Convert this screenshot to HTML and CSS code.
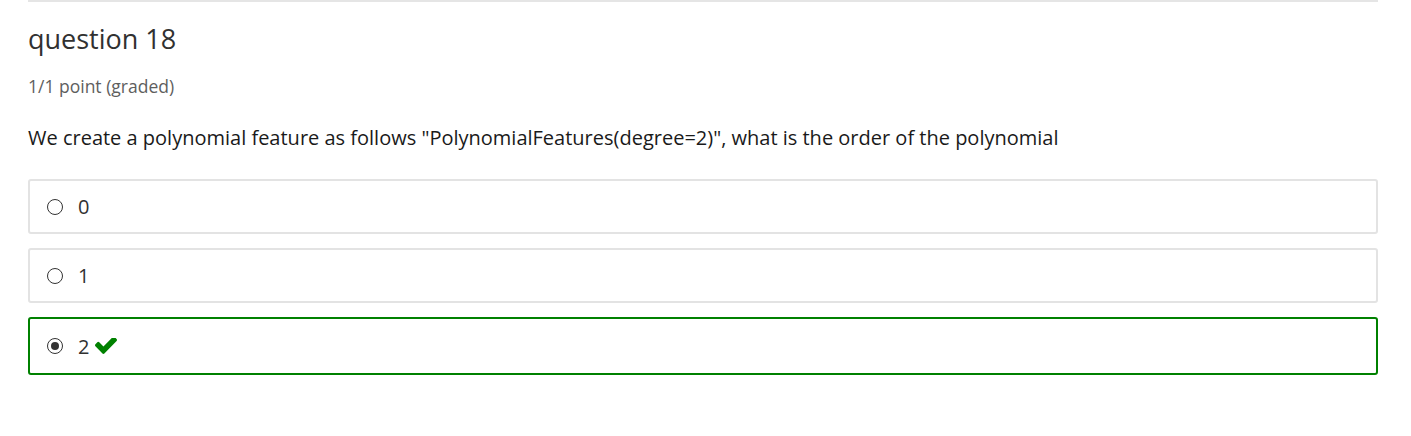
FILE: index.html
```html
<!DOCTYPE html>
<html lang="en">
<head>
<meta charset="utf-8">
<title>question 18</title>
<link rel="stylesheet" href="styles.css">
</head>
<body>
<div class="problem">
  <h3 class="problem-header">question 18</h3>
  <div class="problem-progress">1/1 point (graded)</div>
  <p class="question">We create a polynomial feature as follows "PolynomialFeatures(degree=2)", what is the order of the polynomial</p>
  <div class="choices">
    <label class="field">
      <span class="radio"></span>
      <span class="label-text">0</span>
    </label>
    <label class="field">
      <span class="radio"></span>
      <span class="label-text">1</span>
    </label>
    <label class="field correct">
      <span class="radio checked"></span>
      <span class="label-text">2</span>
      <svg class="check" viewBox="121 430 1550 1100" width="22" height="16" preserveAspectRatio="none" aria-hidden="true"><path d="M1671 566q0 40-28 68l-724 724-136 136q-28 28-68 28t-68-28l-136-136-362-362q-28-28-28-68t28-68l136-136q28-28 68-28t68 28l294 295 656-657q28-28 68-28t68 28l136 136q28 28 28 68z"/></svg>
    </label>
  </div>
</div>
</body>
</html>
```
FILE: styles.css
```css
html, body {
  margin: 0;
  padding: 0;
  background: #fff;
}
body {
  font-family: "Open Sans", "Noto Sans", sans-serif;
  color: #313131;
}
.problem {
  width: 1350px;
  margin-left: 28px;
  border-top: 2px solid #e5e5e5;
  box-sizing: border-box;
}
.problem-header {
  margin: 19px 0 0 0;
  font-size: 27px;
  font-weight: 400;
  line-height: 36px;
  color: #313131;
}
.problem-progress {
  margin-top: 17px;
  font-size: 17.5px;
  line-height: 24px;
  color: #5e5e5e;
}
.question {
  margin: 25px 0 0 0;
  font-size: 20px;
  line-height: 30px;
  color: #1a1a1a;
}
.choices {
  margin-top: 26px;
  display: flex;
  flex-direction: column;
  gap: 14px;
}
.field {
  display: flex;
  align-items: center;
  height: 55px;
  box-sizing: border-box;
  border: 2px solid #e3e3e3;
  border-radius: 3px;
  padding-left: 17px;
  font-size: 20px;
  color: #313131;
}
.field.correct {
  height: 58px;
  border-color: #008100;
}
.radio {
  width: 16px;
  height: 16px;
  border: 1px solid #333;
  border-radius: 50%;
  box-sizing: border-box;
  flex: none;
  position: relative;
  background: #fff;
}
.radio.checked::after {
  content: "";
  position: absolute;
  left: 3px;
  top: 3px;
  width: 8px;
  height: 8px;
  border-radius: 50%;
  background: #333;
}
.label-text {
  margin-left: 15px;
}
.check {
  margin-left: 6px;
  fill: #008100;
}
```
